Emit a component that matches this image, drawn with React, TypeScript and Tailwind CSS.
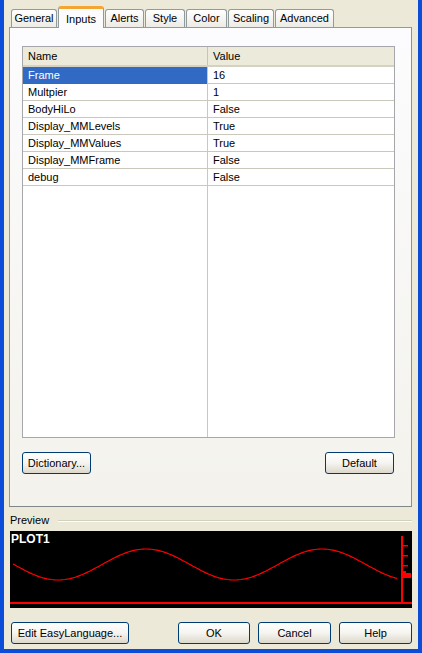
const tabs = [
  { label: "General", w: "w-[46px]" },
  { label: "Inputs", w: "w-[46px]", active: true },
  { label: "Alerts", w: "w-[39px]" },
  { label: "Style", w: "w-[40px]" },
  { label: "Color", w: "w-[41px]" },
  { label: "Scaling", w: "w-[46px]" },
  { label: "Advanced", w: "w-[59px]" },
];

const inputs = [
  ["Frame", "16"],
  ["Multpier", "1"],
  ["BodyHiLo", "False"],
  ["Display_MMLevels", "True"],
  ["Display_MMValues", "True"],
  ["Display_MMFrame", "False"],
  ["debug", "False"],
];

function XpButton({ label, className }: { label: string; className: string }) {
  return (
    <button
      className={
        "h-[22px] rounded-[3px] border border-[#003C74] bg-gradient-to-b from-[#FFFFFF] via-[#F5F4F0] to-[#DCD8CC] text-[11px] text-black leading-none " +
        className
      }
    >
      {label}
    </button>
  );
}

// red sine plot with a price axis on the right
function PreviewChart() {
  const pts: string[] = [];
  for (let x = 3; x <= 388; x += 2) {
    const y = 33.5 + 15.5 * Math.cos((2 * Math.PI * (x - 48)) / 176);
    pts.push(`${x},${y.toFixed(2)}`);
  }
  return (
    <div className="relative w-[402px] h-[77px] bg-black ml-[6px] mt-[4px]">
      <svg width="402" height="77" className="block">
        <polyline points={pts.join(" ")} fill="none" stroke="#FF0000" strokeWidth="1.2" />
        <rect x="0" y="71" width="402" height="2" fill="#FF0000" />
        <rect x="391" y="5" width="2" height="67" fill="#FF0000" />
        <rect x="393" y="14" width="5" height="1.5" fill="#FF0000" />
        <rect x="393" y="24" width="5" height="1.5" fill="#FF0000" />
        <rect x="393" y="34" width="5" height="1.5" fill="#FF0000" />
        <rect x="393" y="42" width="8" height="5" fill="#FF0000" />
        <rect x="393" y="40" width="3" height="2" fill="#FF0000" />
      </svg>
      <span className="absolute left-[1px] top-[2px] text-white font-bold text-[12px] leading-none">
        PLOT1
      </span>
    </div>
  );
}

export default function App() {
  return (
    <div className="w-[422px] h-[653px] bg-[#ECE9D8] border-x-4 border-b-4 border-x-[#0B4CD9] border-b-[#0B4CD9] flex flex-col font-['Liberation_Sans',Arial,sans-serif] text-[11px] text-black">
      {/* tab strip */}
      <div className="h-[27px] flex items-end pl-[7px] gap-px">
        {tabs.map((t) =>
          t.active ? (
            <div
              key={t.label}
              className={`${t.w} relative z-10 -mb-px h-[22px] rounded-t-[3px] border-x border-[#919B9C] border-t-[3px] border-t-[#F5A632] bg-[#FCFCFE] flex justify-center pt-[2px]`}
            >
              {t.label}
            </div>
          ) : (
            <div
              key={t.label}
              className={`${t.w} h-[18px] rounded-t-[3px] border-x border-t border-[#919B9C] bg-gradient-to-b from-[#FFFFFF] to-[#ECEBE5] flex items-center justify-center`}
            >
              {t.label}
            </div>
          )
        )}
      </div>

      {/* tab page */}
      <div className="ml-[5px] w-[403px] h-[480px] border border-[#919B9C] border-r-[#8A9192] border-b-[#7F8788] bg-gradient-to-b from-[#FCFCFE] to-[#F3F2EC] pl-[12px] pt-[18px]">
        <div className="w-[373px] h-[392px] border border-[#A7A6AA] bg-white flex flex-col">
          <div className="h-[20px] shrink-0 grid grid-cols-[185px_1fr] bg-[#EBEADB] border-b-2 border-[#D6D2C2]">
            <div className="pl-[5px] flex items-center border-r border-[#C7C5B2]">Name</div>
            <div className="pl-[5px] flex items-center">Value</div>
          </div>
          {inputs.map(([name, value], i) => (
            <div key={name} className="h-[17px] shrink-0 grid grid-cols-[185px_1fr] border-b border-[#CAC8BB]">
              <div
                className={
                  i === 0
                    ? "pl-[5px] flex items-center bg-[#316AC5] text-white border-r border-[#CAC8BB]"
                    : "pl-[5px] flex items-center border-r border-[#CAC8BB]"
                }
              >
                {name}
              </div>
              <div className="pl-[5px] flex items-center">{value}</div>
            </div>
          ))}
          <div className="flex-1 grid grid-cols-[185px_1fr]">
            <div className="border-r border-[#CAC8BB]" />
            <div />
          </div>
        </div>
        <div className="w-[372px] mt-[14px] flex justify-between">
          <XpButton label="Dictionary..." className="w-[69px]" />
          <XpButton label="Default" className="w-[69px]" />
        </div>
      </div>

      {/* preview group */}
      <div className="mt-[7px] h-[13px] flex items-center pl-[6px]">
        <span>Preview</span>
        <div className="ml-[9px] w-[354px] border-t border-[#D0D0BF] border-b border-b-white" />
      </div>
      <PreviewChart />

      <div className="mt-[14px] flex items-center pl-[7px]">
        <XpButton label="Edit EasyLanguage..." className="w-[118px]" />
        <XpButton label="OK" className="w-[72px] ml-[49px]" />
        <XpButton label="Cancel" className="w-[73px] ml-[8px]" />
        <XpButton label="Help" className="w-[73px] ml-[8px]" />
      </div>
    </div>
  );
}
